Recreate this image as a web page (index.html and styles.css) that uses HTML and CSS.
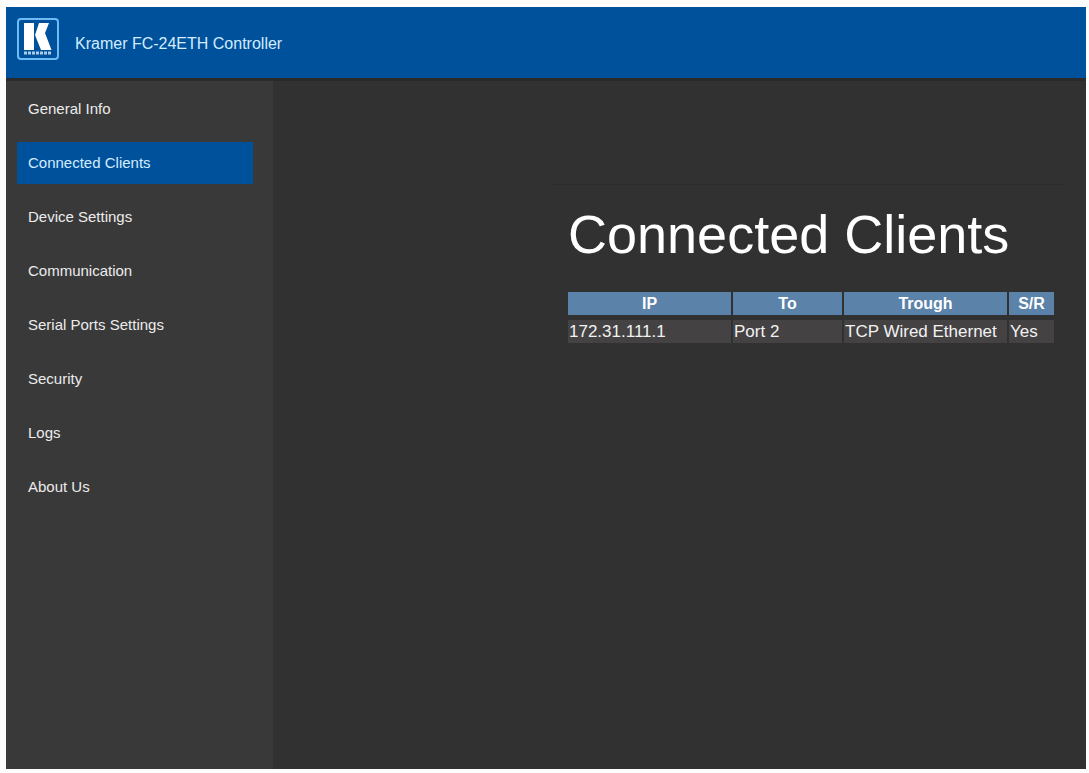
FILE: index.html
```html
<!DOCTYPE html>
<html lang="en">
<head>
  <meta charset="utf-8">
  <title>Kramer FC-24ETH Controller</title>
  <link rel="stylesheet" href="styles.css">
</head>
<body>
  <div class="app">
    <header class="header">
      <svg class="logo" viewBox="0 0 42 42" role="img" aria-label="Kramer">
        <rect class="logo-frame" x="1" y="1" width="40" height="40" rx="3"/>
        <path class="logo-mark" d="M7 5H17V32H7ZM22 5H32L28 15L34.500 32H24L18 17Z"/>
        <path class="logo-band" d="M7 35H34"/>
      </svg>
      <span class="product">Kramer FC-24ETH Controller</span>
    </header>
    <div class="body">
      <nav class="sidebar">
        <a class="nav-link" href="#">General Info</a>
        <a class="nav-link active" href="#" aria-current="page">Connected Clients</a>
        <a class="nav-link" href="#">Device Settings</a>
        <a class="nav-link" href="#">Communication</a>
        <a class="nav-link" href="#">Serial Ports Settings</a>
        <a class="nav-link" href="#">Security</a>
        <a class="nav-link" href="#">Logs</a>
        <a class="nav-link" href="#">About Us</a>
      </nav>
      <main class="main">
        <section class="panel">
          <h1 class="title">Connected Clients</h1>
          <table class="clients">
            <colgroup><col class="col-ip"><col class="col-to"><col class="col-through"><col class="col-sr"></colgroup>
            <thead>
              <tr><th scope="col">IP</th><th scope="col">To</th><th scope="col">Trough</th><th scope="col">S/R</th></tr>
            </thead>
            <tbody>
              <tr><td>172.31.111.1</td><td>Port 2</td><td>TCP Wired Ethernet</td><td>Yes</td></tr>
            </tbody>
          </table>
        </section>
      </main>
    </div>
  </div>
</body>
</html>
```
FILE: styles.css
```css
* {
  box-sizing: border-box;
}

body {
  margin: 0;
  min-height: 100vh;
  padding: 7px 3px 4px 6px;
  display: flex;
  background: #fdfdfd;
  color: #f2f2f2;
  font-family: "Liberation Sans", Arial, sans-serif;
}

.app {
  flex: 1;
  display: flex;
  flex-direction: column;
  background: #313131;
}

.header {
  display: flex;
  align-items: flex-start;
  gap: 16px;
  height: 71px;
  padding: 11px;
  background: #00519c;
}

.logo {
  width: 42px;
  height: 42px;
}

.logo-frame {
  fill: none;
  stroke: #6dbcf5;
  stroke-width: 2;
}

.logo-mark {
  fill: #ffffff;
}

.logo-band {
  fill: none;
  stroke: #a9cdea;
  stroke-width: 3;
  stroke-dasharray: 3 1;
}

.product {
  color: #d3ecff;
  font-size: 16px;
  line-height: 52px;
}

.body {
  flex: 1;
  display: flex;
  border-top: 3px solid #292a2a;
}

.sidebar {
  flex: 0 0 267px;
  display: flex;
  flex-direction: column;
  gap: 12px;
  padding: 7px 20px 7px 11px;
  background: #393939;
}

.nav-link {
  padding: 0 11px;
  color: #ececec;
  font-size: 15px;
  line-height: 42px;
  text-decoration: none;
}

.nav-link.active {
  background: #00519c;
  color: #d3ecff;
}

.main {
  flex: 1;
  display: flex;
  justify-content: flex-end;
  align-items: flex-start;
  padding: 103px 22px 24px;
}

.panel {
  padding: 18px 10px 16px 16px;
  border-top: 1px solid #2b2b2b;
}

.title {
  margin: 0 0 22px;
  color: #ffffff;
  font-size: 54px;
  font-weight: 400;
  line-height: 62px;
}

.clients {
  border-collapse: separate;
  border-spacing: 2px 5px;
  margin: 0 -2px;
  font-size: 17px;
  line-height: 23px;
}

.clients th,
.clients td {
  padding: 0 1px;
  white-space: nowrap;
}

.clients th {
  background: #5b82a9;
  color: #ffffff;
  font-size: 16px;
  font-weight: 700;
  text-align: center;
}

.clients td {
  background: #444243;
}

.col-ip,
.col-through {
  width: 163px;
}

.col-to {
  width: 109px;
}

.col-sr {
  width: 45px;
}
```
